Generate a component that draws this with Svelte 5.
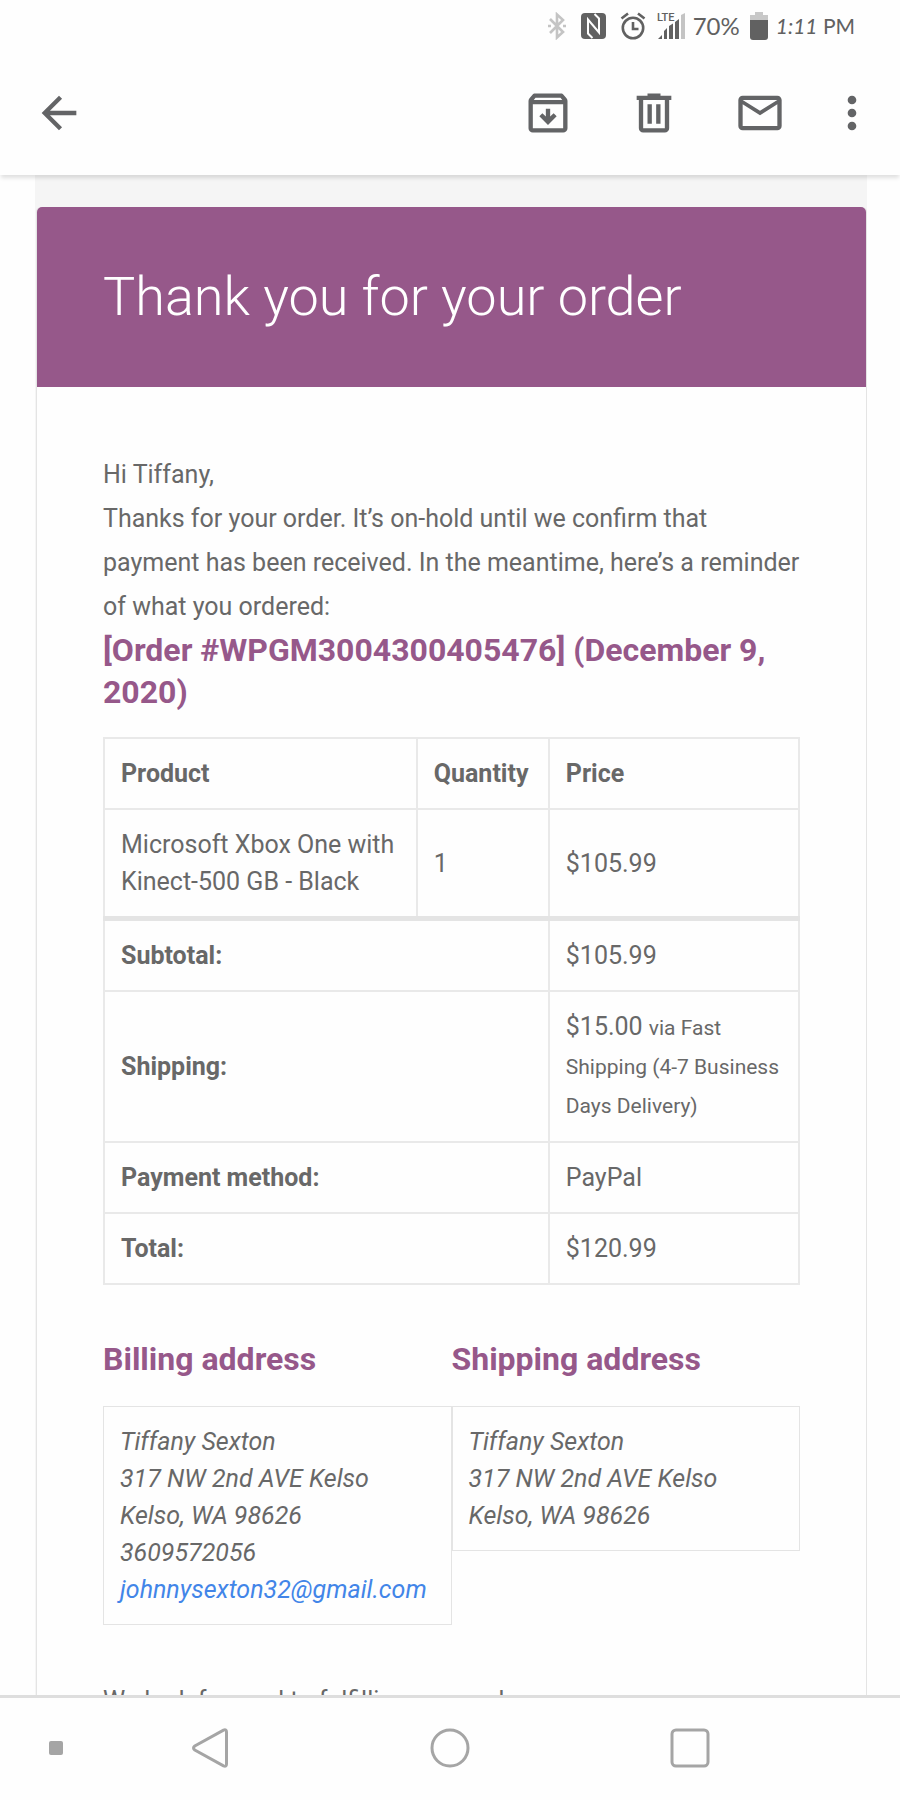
<script>
  const greeting = 'Hi Tiffany,';
  const totals = [
    { label: 'Subtotal:', value: '$105.99' },
    { label: 'Shipping:', value: '$15.00', note: 'via Fast Shipping (4-7 Business Days Delivery)' },
    { label: 'Payment method:', value: 'PayPal' },
    { label: 'Total:', value: '$120.99' }
  ];
  const lines = ['Tiffany Sexton', '317 NW 2nd AVE Kelso', 'Kelso, WA 98626'];
  const phone = '3609572056';
  const email = 'johnnysexton32@gmail.com';
</script>

<div class="screen">
  <div class="status">
    <svg class="faint" width="18" height="28" viewBox="0 0 18 28" fill="none" stroke="currentColor" stroke-width="2.6">
      <path d="M2 7l13 13-6 5.500V2.500l6 5.500L2 21" />
      <path d="M0 14h3M15 14h3" />
    </svg>
    <svg class="nfc" width="25" height="26" viewBox="0 0 25 26">
      <rect width="25" height="26" rx="4" fill="currentColor" />
      <path d="M11.500 25L7 20.500V6.500L18 19.500V5.500L13.500 1" fill="none" stroke="#fefefe" stroke-width="2" />
    </svg>
    <svg class="alarm" width="26" height="28" viewBox="0 0 26 28" fill="none" stroke="currentColor" stroke-width="2.600">
      <circle cx="13" cy="16" r="10.200" />
      <path d="M13 10v7h5.500M1.500 6.500L8 1.500M24.500 6.500L18 1.500" />
    </svg>
    <svg class="signal" width="28" height="28" viewBox="0 0 28 28">
      <text x="0" y="9" font-size="11" font-weight="500" fill="currentColor">LTE</text>
      <path d="M1 27l4-4v4zM7 27v-8l3-3v11zM12 27V14l4-2.500V27zM18 27V10l4-3v20z" fill="currentColor" />
      <path d="M24 27V3l4-2v26z" fill="#c4c4c4" />
    </svg>
    <span class="percent">70%</span>
    <svg class="battery" width="18" height="28" viewBox="0 0 18 28">
      <path d="M5 0h8v3h5v6H0V3h5z" fill="#c8c8c8" />
      <path d="M0 8h18v17q0 3-3 3H3q-3 0-3-3z" fill="currentColor" />
    </svg>
    <span class="time"><i>1:11</i> PM</span>
  </div>

  <header class="toolbar">
    <button aria-label="Back">
      <svg viewBox="0 0 24 24"><path d="M20 11H7.830l5.590-5.590L12 4l-8 8 8 8 1.410-1.410L7.830 13H20z" /></svg>
    </button>
    <div class="actions">
      <button aria-label="Archive">
        <svg viewBox="0 0 24 24"><path d="M20.540 5.230l-1.390-1.680C18.880 3.210 18.470 3 18 3H6c-.47 0-.88.21-1.160.55L3.460 5.230C3.170 5.570 3 6.020 3 6.500V19c0 1.100.9 2 2 2h14c1.100 0 2-.9 2-2V6.500c0-.48-.17-.93-.46-1.270zM6.240 5h11.520l.83 1H5.420l.82-1zM5 19V8h14v11H5zm11-5.500l-4 4-4-4 1.410-1.410L11 13.670V10h2v3.670l1.590-1.590L16 13.500z" /></svg>
      </button>
      <button aria-label="Delete">
        <svg viewBox="0 0 24 24"><path d="M15 4V3H9v1H4v2h1v13c0 1.100.9 2 2 2h10c1.100 0 2-.9 2-2V6h1V4h-5zm2 15H7V6h10v13zM9 8h2v9H9zm4 0h2v9h-2z" /></svg>
      </button>
      <button aria-label="Mark unread">
        <svg viewBox="0 0 24 24"><path d="M20 4H4c-1.100 0-2 .9-2 2v12c0 1.100.9 2 2 2h16c1.100 0 2-.9 2-2V6c0-1.100-.9-2-2-2zm0 14H4V8l8 5 8-5v10zm-8-7L4 6h16l-8 5z" /></svg>
      </button>
      <button class="more" aria-label="More options">
        <svg viewBox="0 0 24 24"><path d="M12 8c1.100 0 2-.9 2-2s-.9-2-2-2-2 .9-2 2 .9 2 2 2zm0 2c-1.100 0-2 .9-2 2s.9 2 2 2 2-.9 2-2-.9-2-2-2zm0 6c-1.100 0-2 .9-2 2s.9 2 2 2 2-.9 2-2-.9-2-2-2z" /></svg>
      </button>
    </div>
  </header>

  <main>
    <div class="mail">
      <article class="card">
        <h1>Thank you for your order</h1>
        <div class="body">
          <p>{greeting}</p>
          <p>Thanks for your order. It’s on-hold until we confirm that payment has been received. In the meantime, here’s a reminder of what you ordered:</p>
          <h2>[Order #WPGM3004300405476] (December 9, 2020)</h2>

          <table>
            <colgroup><col class="c1" /><col class="c2" /><col class="c3" /></colgroup>
            <thead>
              <tr><th scope="col">Product</th><th scope="col">Quantity</th><th scope="col">Price</th></tr>
            </thead>
            <tbody>
              <tr><td>Microsoft Xbox One with Kinect-500 GB - Black</td><td>1</td><td>$105.99</td></tr>
            </tbody>
            <tfoot>
              {#each totals as row}
                <tr>
                  <th scope="row" colspan="2">{row.label}</th>
                  <td>{row.value}{#if row.note}{' '}<small>{row.note}</small>{/if}</td>
                </tr>
              {/each}
            </tfoot>
          </table>

          <div class="addresses">
            <section>
              <h2>Billing address</h2>
              <address>
                {#each lines as line}<div>{line}</div>{/each}
                <div>{phone}</div>
                <a href="mailto:{email}">{email}</a>
              </address>
            </section>
            <section>
              <h2>Shipping address</h2>
              <address>
                {#each lines as line}<div>{line}</div>{/each}
              </address>
            </section>
          </div>

          <p>We look forward to fulfilling your order soon.</p>
        </div>
      </article>
    </div>
  </main>

  <nav>
    <button class="dot" aria-label="Hide navigation bar"><span></span></button>
    <button aria-label="Back">
      <svg width="40" height="40" viewBox="0 0 40 40"><path d="M33.500 2.200Q36.500 1 36.500 4v32q0 3-3 1.800L4.800 22Q2.200 20 4.800 18z" /></svg>
    </button>
    <button aria-label="Home">
      <svg width="40" height="40" viewBox="0 0 40 40"><circle cx="20" cy="20" r="18" /></svg>
    </button>
    <button aria-label="Recent apps">
      <svg width="40" height="40" viewBox="0 0 40 40"><rect x="2" y="2" width="36" height="36" rx="4" /></svg>
    </button>
  </nav>
</div>

<style>
  :global(body) { margin: 0; background: #fefefe; }
  .screen {
    display: flex;
    flex-direction: column;
    height: 100vh;
    background: #fefefe;
    color: #686868;
    font: 400 25px/37px Roboto, sans-serif;
  }
  button {
    display: flex;
    align-items: center;
    justify-content: center;
    padding: 0;
    border: 0;
    background: none;
    color: inherit;
  }

  .status {
    display: flex;
    align-items: center;
    justify-content: flex-end;
    height: 52px;
    padding-right: 45px;
    color: #616161;
    font: 400 24px/28px Lato, sans-serif;
  }
  .faint { color: #c4c4c4; }
  .nfc { margin-left: 15px; }
  .alarm { margin-left: 14px; }
  .signal { margin-left: 11px; font-family: Roboto, sans-serif; }
  .percent { margin-left: 8px; }
  .battery { margin: 0 8px 0 10px; }
  .time { font-size: 21px; }

  .toolbar {
    position: relative;
    z-index: 1;
    display: flex;
    justify-content: space-between;
    align-items: center;
    height: 121px;
    padding: 0 22px 2px 33px;
    background: #fefefe;
    box-shadow: 0 4px 4px -1px rgba(0, 0, 0, 0.12);
    color: #636466;
  }
  .toolbar svg { width: 52px; height: 52px; fill: currentColor; }
  .actions { display: flex; gap: 54px; }
  .more { margin-left: -14px; }

  main {
    flex: 1;
    min-height: 0;
    overflow-y: auto;
    scrollbar-width: none;
  }
  .mail { margin: 0 33px 0 35px; padding: 32px 0 32px 1px; background: #f5f5f5; }
  .card {
    border: 1px solid #e4e4e4;
    border-top: 0;
    border-radius: 5px;
    background: #fefefe;
  }
  h1 {
    margin: 0;
    padding: 48px 66px;
    border-radius: 5px 5px 0 0;
    background: #96588a;
    color: #fff;
    font-size: 54px;
    font-weight: 300;
    line-height: 84px;
  }
  .body { padding: 66px 66px 84px; }
  p { margin: 0; line-height: 44px; }
  h2 {
    margin: 0 0 26px;
    color: #96588a;
    font-size: 32px;
    font-weight: 700;
    line-height: 42px;
  }
  p + h2 { margin-bottom: 24px; }

  table {
    width: 100%;
    table-layout: fixed;
    border-collapse: collapse;
  }
  .c1 { width: 45%; }
  .c2 { width: 19%; }
  .c3 { width: 36%; }
  th, td {
    padding: 16px;
    border: 2px solid #e9e9e9;
    text-align: left;
    vertical-align: middle;
  }
  th { font-weight: 700; }
  tfoot tr:first-child > * { border-top: 5px solid #e4e4e4; }
  small { font-size: 21px; line-height: 38px; }

  .addresses {
    display: grid;
    grid-template-columns: 1fr 1fr;
    align-items: start;
    margin: 53px 0 54px;
  }
  address {
    padding: 16px;
    border: 1px solid #e4e4e4;
    font-style: italic;
  }
  a { color: #4285e8; text-decoration: none; }

  nav {
    display: grid;
    grid-template-columns: 10% 1fr 1fr 1fr 10%;
    padding: 30px 0 32px;
    border-top: 3px solid #dedede;
    color: #a5a5a5;
  }
  nav svg { fill: none; stroke: currentColor; stroke-width: 3; }
  .dot { justify-content: flex-end; padding-right: 27px; }
  .dot span { width: 14px; height: 14px; border-radius: 2px; background: #a5a5a5; }
</style>
